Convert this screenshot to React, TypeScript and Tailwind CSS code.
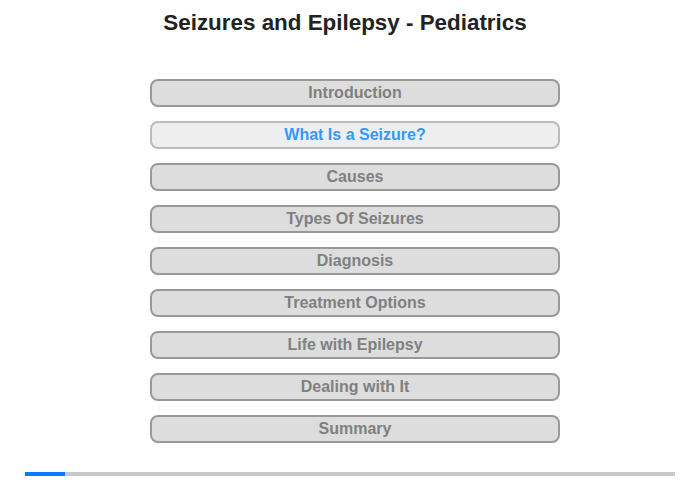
const items = [
  "Introduction",
  "What Is a Seizure?",
  "Causes",
  "Types Of Seizures",
  "Diagnosis",
  "Treatment Options",
  "Life with Epilepsy",
  "Dealing with It",
  "Summary",
];

const active = 1;

export default function App() {
  return (
    <div
      className="w-[700px] h-[480px] bg-white flex flex-col items-center"
      style={{ fontFamily: '"Liberation Sans", Arial, sans-serif' }}
    >
      <h1 className="mt-[10px] h-[26px] text-[22.4px] leading-[26px] font-bold text-[#222] -translate-x-[5px]">
        Seizures and Epilepsy - Pediatrics
      </h1>

      <div className="mt-[43px] ml-[10px] flex flex-col gap-[14px]">
        {items.map((label, i) => (
          <button
            key={label}
            className={`w-[410px] h-[28px] rounded-[8px] border-2 text-[16px] leading-none font-bold ${
              i === active
                ? "bg-[#eeeeee] border-[#bbbbbb] text-[#3399ff]"
                : "bg-[#dddddd] border-[#999999] text-[#808080]"
            }`}
          >
            {label}
          </button>
        ))}
      </div>

      <div className="mt-[29px] w-[650px] h-[4px] bg-[#c8c8c8] flex">
        <div className="w-[40px] h-full bg-[#0a7cff]" />
      </div>
    </div>
  );
}
